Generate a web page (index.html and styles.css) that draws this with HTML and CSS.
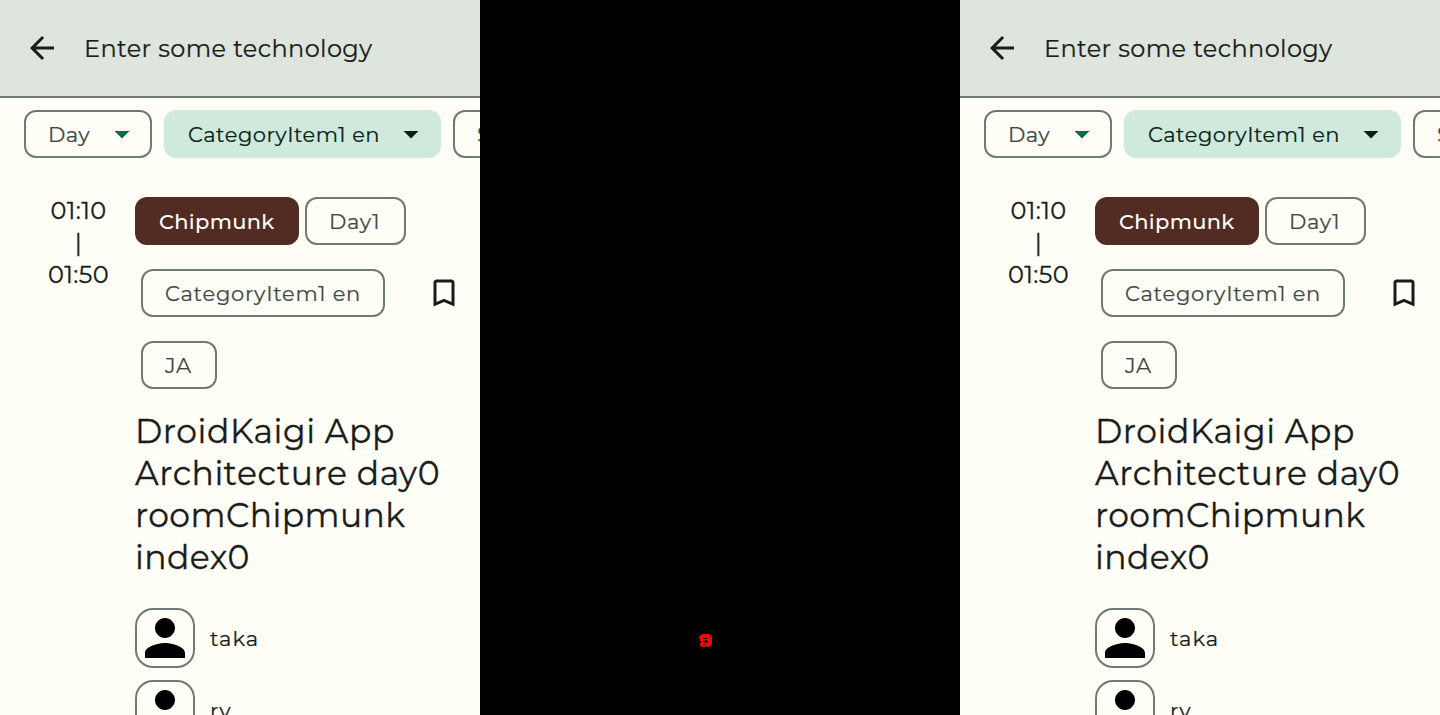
FILE: index.html
```html
<!DOCTYPE html>
<html lang="en">
<head>
<meta charset="utf-8">
<title>Session search</title>
<link rel="stylesheet" href="styles.css">
</head>
<body>
<svg class="defs" aria-hidden="true">
<symbol id="back" viewBox="0 0 24 24"><path d="M20 11H7.83l5.59-5.59L12 4l-8 8 8 8 1.41-1.41L7.83 13H20z"/></symbol>
<symbol id="drop" viewBox="0 0 24 24"><path d="M7 10l5 5 5-5z"/></symbol>
<symbol id="bookmark" viewBox="0 0 24 24"><path d="M17 3H7c-1.1 0-2 .9-2 2v16l7-3 7 3V5c0-1.1-.9-2-2-2zm0 15l-5-2.18L7 18V5h10v13z"/></symbol>
<symbol id="person" viewBox="0 0 24 24"><path d="M12 12c2.21 0 4-1.79 4-4s-1.79-4-4-4-4 1.79-4 4 1.79 4 4 4zm0 2c-2.67 0-8 1.34-8 4v2h16v-2c0-2.66-5.33-4-8-4z"/></symbol>
</svg>
<main class="board">
<section class="phone">
<header class="bar"><svg class="icon"><use href="#back"/></svg><span class="query">Enter some technology</span></header>
<nav class="filters">
<div class="chip day"><span>Day</span><svg class="icon"><use href="#drop"/></svg></div>
<div class="chip category on"><span>CategoryItem1 en</span><svg class="icon"><use href="#drop"/></svg></div>
<div class="chip more"><span>S</span></div>
</nav>
<article class="session">
<div class="time"><span>01:10</span><span>|</span><span>01:50</span></div>
<div class="body">
<div class="top">
<div class="tags">
<div class="row"><div class="chip room"><span>Chipmunk</span></div><div class="chip d1"><span>Day1</span></div></div>
<div class="row in"><div class="chip cat"><span>CategoryItem1 en</span></div></div>
<div class="row in"><div class="chip lang"><span>JA</span></div></div>
</div>
<svg class="icon"><use href="#bookmark"/></svg>
</div>
<h1>DroidKaigi App<br>Architecture day0<br><span class="tight">roomChipmunk</span><br><span class="tight">index0</span></h1>
<div class="speaker"><svg class="avatar"><use href="#person"/></svg><span>taka</span></div>
<div class="speaker"><svg class="avatar"><use href="#person"/></svg><span>ry</span></div>
</div>
</article>
</section>
<section class="diff"><svg class="blot" viewBox="0 0 14 14"><path d="M3 0h3v1h1V0h3v1h2v2h1v7h-1v2h-2v1H8v-1H6v1H3v-1H1V9h1V7H1V4H0V3h1V1h2z"/><path class="hole" d="M4 4h4v1H4zM6 6h2v1h1v1H8v1H6V8H4V7h2zM5 10h1v1H5z"/></svg></section>
<section class="phone">
<header class="bar"><svg class="icon"><use href="#back"/></svg><span class="query">Enter some technology</span></header>
<nav class="filters">
<div class="chip day"><span>Day</span><svg class="icon"><use href="#drop"/></svg></div>
<div class="chip category on"><span>CategoryItem1 en</span><svg class="icon"><use href="#drop"/></svg></div>
<div class="chip more"><span>S</span></div>
</nav>
<article class="session">
<div class="time"><span>01:10</span><span>|</span><span>01:50</span></div>
<div class="body">
<div class="top">
<div class="tags">
<div class="row"><div class="chip room"><span>Chipmunk</span></div><div class="chip d1"><span>Day1</span></div></div>
<div class="row in"><div class="chip cat"><span>CategoryItem1 en</span></div></div>
<div class="row in"><div class="chip lang"><span>JA</span></div></div>
</div>
<svg class="icon"><use href="#bookmark"/></svg>
</div>
<h1>DroidKaigi App<br>Architecture day0<br><span class="tight">roomChipmunk</span><br><span class="tight">index0</span></h1>
<div class="speaker"><svg class="avatar"><use href="#person"/></svg><span>taka</span></div>
<div class="speaker"><svg class="avatar"><use href="#person"/></svg><span>ry</span></div>
</div>
</article>
</section>
</main>
</body>
</html>
```
FILE: styles.css
```css
* { box-sizing: border-box; }
body { margin: 0; background: #000; font-family: Montserrat, Inter, sans-serif; font-weight: 400; color: #191c1b; overflow: hidden; }
.defs { display: none; }
.board { display: grid; grid-template-columns: repeat(3, 480px); height: 715px; overflow: hidden; }
.phone { background: #fffff7; overflow: hidden; height: 715px; }
.icon { width: 36px; height: 36px; flex: none; fill: currentColor; }
.bar { display: flex; align-items: center; height: 98px; padding-left: 24px; gap: 24px; background: #dde5dd; border-bottom: 2px solid #6f7975; }
.query { font-size: 24px; letter-spacing: 0.38px; white-space: nowrap; -webkit-text-stroke: 0.2px; }
.filters { display: flex; gap: 12px; padding: 12px 0 0 24px; }
.chip { display: flex; flex: none; align-items: center; height: 48px; padding-left: 22px; border: 2px solid #6f7975; border-radius: 12px; font-size: 21px; letter-spacing: 0.75px; color: #3f4945; white-space: nowrap; -webkit-text-stroke: 0.2px; }
.day { width: 128px; justify-content: space-between; padding-right: 10px; }
.day .icon { color: #006c4f; }
.category { width: 277px; justify-content: space-between; padding-right: 10px; }
.filters .chip { letter-spacing: 0.5px; }
.filters .on { background: #cfeadd; border-color: #cfeadd; color: #0a1f17; }
.more { width: 140px; }
.session { display: flex; padding-top: 37px; }
.time { display: flex; flex-direction: column; align-items: center; flex: none; width: 109px; padding-left: 48px; margin-right: 26px; font-size: 24px; letter-spacing: 0.4px; line-height: 32px; height: 96px; -webkit-text-stroke: 0.3px; }
.body { flex: 1; padding-top: 2px; }
.top { display: flex; justify-content: space-between; align-items: center; padding-right: 18px; }
.tags { display: flex; flex-direction: column; gap: 24px; }
.row { display: flex; gap: 6px; }
.in { padding-left: 6px; }
.row .room { width: 164px; background: #522b22; border-color: #522b22; color: #fff; font-weight: 500; letter-spacing: 0.3px; -webkit-text-stroke: 0; }
.d1 { width: 101px; }
.cat { width: 244px; }
.lang { width: 76px; }
h1 { margin: 21px 0 30px; font-size: 33px; font-weight: 400; letter-spacing: 0.58px; line-height: 42px; white-space: nowrap; -webkit-text-stroke: 0.3px; }
.tight { letter-spacing: 0.42px; }
.speaker { display: flex; align-items: center; gap: 15px; height: 60px; margin-bottom: 12px; font-size: 21px; letter-spacing: 1px; -webkit-text-stroke: 0.2px; }
.avatar { width: 60px; height: 60px; border-radius: 18px; box-shadow: inset 0 0 0 2px #6f7975; fill: #000; }
.diff { background: #000; padding: 634px 0 0 219px; }
.blot { display: block; width: 14px; height: 14px; fill: #f00; }
.hole { fill: #000; }
```
